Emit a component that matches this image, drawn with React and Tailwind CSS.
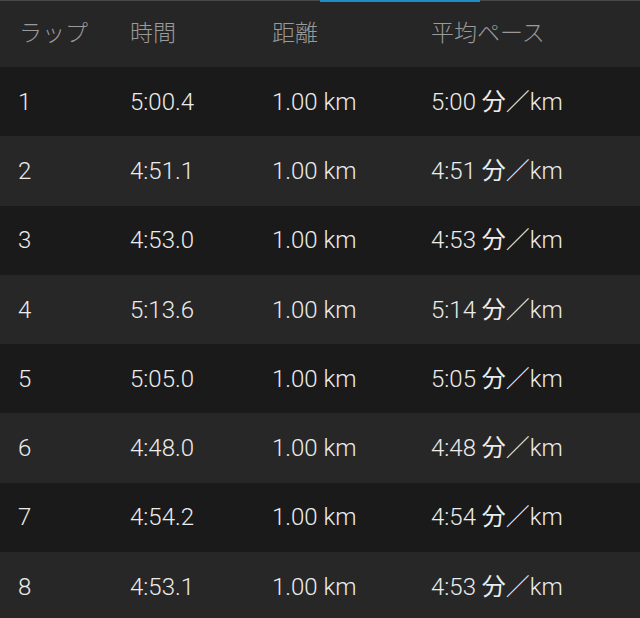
const laps = [
  ['1', '5:00.4', '5:00'],
  ['2', '4:51.1', '4:51'],
  ['3', '4:53.0', '4:53'],
  ['4', '5:13.6', '5:14'],
  ['5', '5:05.0', '5:05'],
  ['6', '4:48.0', '4:48'],
  ['7', '4:54.2', '4:54'],
  ['8', '4:53.1', '4:53'],
]

const font = "font-['Roboto','Noto_Sans_CJK_JP',sans-serif]"

export default function App() {
  return (
    <div className={`w-[640px] h-[618px] overflow-hidden bg-[#262626] ${font}`}>
      <div className="relative h-[67px] bg-[#262626] border-t border-[#4a4a4a] flex items-center text-[23px] font-light text-[#9a9a9a]">
        <div className="absolute -top-px left-[320px] w-[160px] h-[2px] bg-[#1b8ec4]" />
        <div className="w-[130px] pl-[19px]">ラップ</div>
        <div className="w-[142px]">時間</div>
        <div className="w-[159px]">距離</div>
        <div>平均ペース</div>
      </div>
      {laps.map(([n, t, p], i) => (
        <div
          key={n}
          className={`h-[69.3px] flex items-center text-[24px] font-light text-[#ececec] ${i % 2 === 0 ? 'bg-[#1a1a1a]' : 'bg-[#272727]'}`}
        >
          <div className="w-[130px] pl-[18px]">{n}</div>
          <div className="w-[142px]">{t}</div>
          <div className="w-[159px]">1.00 km</div>
          <div>
            {p} <span className="font-normal">分</span>／km
          </div>
        </div>
      ))}
    </div>
  )
}
